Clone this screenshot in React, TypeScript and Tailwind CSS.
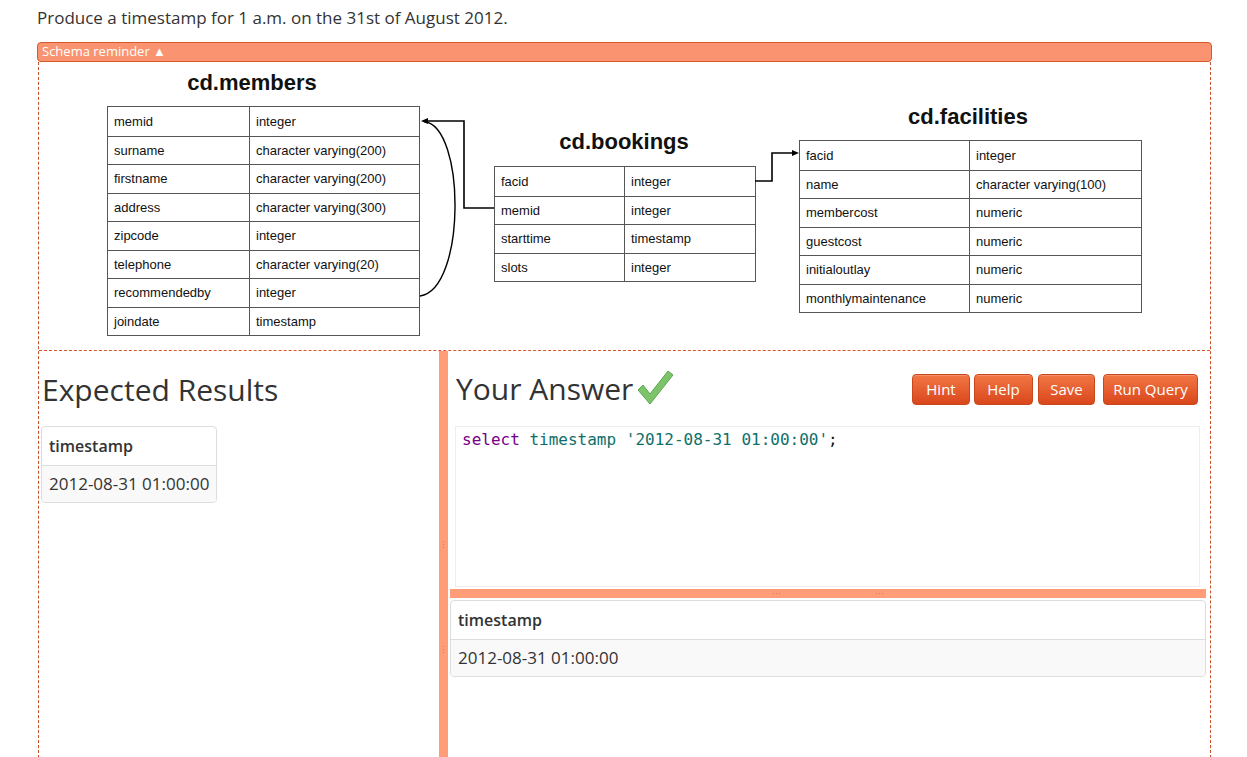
import React from "react";

const ui = { fontFamily: '"Open Sans", "Noto Sans", sans-serif' };
const arial = { fontFamily: '"Liberation Sans", Arial, sans-serif' };
const mono = { fontFamily: '"DejaVu Sans Mono", "Liberation Mono", monospace' };

type Row = [string, string];

function SchemaTable({
  rows,
  left,
  top,
  width,
  col1,
}: {
  rows: Row[];
  left: number;
  top: number;
  width: number;
  col1: number;
}) {
  return (
    <div
      className="absolute border border-[#555] bg-white"
      style={{ left, top, width, ...arial }}
    >
      {rows.map((r, i) => (
        <div
          key={i}
          className={`flex h-[28.5px] items-center text-[13px] text-[#111] ${i > 0 ? "border-t border-[#555]" : ""}`}
        >
          <div className="h-full flex items-center border-r border-[#555] pl-[6px]" style={{ width: col1 }}>
            {r[0]}
          </div>
          <div className="pl-[6px]">{r[1]}</div>
        </div>
      ))}
    </div>
  );
}

function SchemaTitle({ text, cx, cy }: { text: string; cx: number; cy: number }) {
  return (
    <div
      className="absolute -translate-x-1/2 -translate-y-1/2 whitespace-nowrap text-[22px] font-bold text-[#111]"
      style={{ left: cx, top: cy, ...arial }}
    >
      {text}
    </div>
  );
}

function Diagram() {
  const ox = 39;
  const oy = 62;
  return (
    <div className="relative h-[288px] w-full">
      <SchemaTitle text="cd.members" cx={252 - ox} cy={82 - oy} />
      <SchemaTable
        left={107 - ox}
        top={106 - oy}
        width={313}
        col1={142}
        rows={[
          ["memid", "integer"],
          ["surname", "character varying(200)"],
          ["firstname", "character varying(200)"],
          ["address", "character varying(300)"],
          ["zipcode", "integer"],
          ["telephone", "character varying(20)"],
          ["recommendedby", "integer"],
          ["joindate", "timestamp"],
        ]}
      />
      <SchemaTitle text="cd.bookings" cx={624 - ox} cy={141 - oy} />
      <SchemaTable
        left={494 - ox}
        top={166 - oy}
        width={262}
        col1={130}
        rows={[
          ["facid", "integer"],
          ["memid", "integer"],
          ["starttime", "timestamp"],
          ["slots", "integer"],
        ]}
      />
      <SchemaTitle text="cd.facilities" cx={968 - ox} cy={116 - oy} />
      <SchemaTable
        left={799 - ox}
        top={140 - oy}
        width={343}
        col1={170}
        rows={[
          ["facid", "integer"],
          ["name", "character varying(100)"],
          ["membercost", "numeric"],
          ["guestcost", "numeric"],
          ["initialoutlay", "numeric"],
          ["monthlymaintenance", "numeric"],
        ]}
      />
      <svg className="absolute left-0 top-0" width="1173" height="288" fill="none">
        <g transform="translate(-39 -62)">
          <path d="M494 208 H464 V121 H427" stroke="#000" strokeWidth="1.6" />
          <path d="M421 121 L428 118 L428 124 Z" fill="#000" />
          <path d="M420 296 C 466 290, 466 126, 424 121.5" stroke="#000" strokeWidth="1.4" />
          <path d="M755 181 H772 V153 H793" stroke="#000" strokeWidth="1.6" />
          <path d="M799 153 L792 150 L792 156 Z" fill="#000" />
        </g>
      </svg>
    </div>
  );
}

function Btn({ label, w, ml }: { label: string; w: string; ml: string }) {
  return (
    <button
      className={`${w} ${ml} h-[31px] rounded-[4px] border border-[#c9471d] bg-gradient-to-b from-[#f27644] to-[#d9461a] text-[15px] text-white shadow-[inset_0_1px_0_rgba(255,255,255,0.2)]`}
      style={ui}
    >
      {label}
    </button>
  );
}

function Check() {
  return (
    <svg width="38" height="38" viewBox="0 0 38 38">
      <path
        d="M2 21 L7 16 L14 25 L32 2 L37 6 L14 35 Z"
        fill="#7cc36c"
        stroke="#5aa84c"
        strokeWidth="1"
        strokeLinejoin="round"
      />
    </svg>
  );
}

function ResultTable({ width }: { width: string }) {
  return (
    <div className={`${width} overflow-hidden whitespace-nowrap rounded-[4px] border border-[#ddd] text-[#333]`} style={ui}>
      <div className="flex h-[38px] items-center px-[7px] text-[16px] font-semibold">timestamp</div>
      <div className="flex h-[37px] items-center border-t border-[#ddd] bg-[#f9f9f9] px-[7px] text-[17px]">
        2012-08-31 01:00:00
      </div>
    </div>
  );
}

function VDots() {
  return (
    <div className="flex flex-col items-center gap-[2px]">
      <div className="h-[1px] w-[1px] bg-[#c9805f]" />
      <div className="h-[1px] w-[1px] bg-[#c9805f]" />
      <div className="h-[1px] w-[1px] bg-[#c9805f]" />
    </div>
  );
}

function HDots() {
  return (
    <div className="flex gap-[2px]">
      <div className="h-[1px] w-[1px] bg-[#c9805f]" />
      <div className="h-[1px] w-[1px] bg-[#c9805f]" />
      <div className="h-[1px] w-[1px] bg-[#c9805f]" />
    </div>
  );
}

export default function App() {
  return (
    <div className="h-[757px] w-full overflow-hidden bg-white pl-[37px] pr-[35px] text-[#333]" style={ui}>
      <p className="pt-[6px] text-[17px] leading-[24px] text-[#333]">
        Produce a timestamp for 1 a.m. on the 31st of August 2012.
      </p>
      <div className="mt-[12px] flex h-[20px] items-center rounded-[4px] border border-[#d4592c] bg-[#fa9470] pl-[4px] text-[13px] text-white">
        Schema reminder ▲
      </div>
      <div className="ml-[1px] mr-[1px] border-x border-dashed border-x-[#c5502a]">
        <div className="border-b border-dashed border-b-[#d9552a]">
          <Diagram />
        </div>
        <div className="flex h-[407px]">
          <div className="w-[400px] shrink-0 pl-[3px]">
            <h2 className="mt-[19px] text-[30px] leading-[40px] text-[#333]">Expected Results</h2>
            <div className="-ml-[1px] mt-[16px]">
              <ResultTable width="w-fit" />
            </div>
          </div>
          <div className="flex w-[9px] shrink-0 flex-col items-center justify-center gap-[98px] bg-[#ff9d78] pt-[85px]">
            <VDots />
            <VDots />
          </div>
          <div className="flex min-w-0 flex-1 flex-col">
            <div className="flex h-[75px] items-center pl-[8px] pr-[12px]">
              <h2 className="text-[30px] leading-[40px] text-[#333]">Your Answer</h2>
              <div className="ml-[3px] mt-[-2px]">
                <Check />
              </div>
              <div className="ml-auto mt-[2px] flex">
                <Btn label="Hint" w="w-[58px]" ml="ml-0" />
                <Btn label="Help" w="w-[59px]" ml="ml-[4px]" />
                <Btn label="Save" w="w-[57px]" ml="ml-[5px]" />
                <Btn label="Run Query" w="w-[95px]" ml="ml-[8px]" />
              </div>
            </div>
            <div className="ml-[7px] mr-[10px] h-[161px] border border-[#eee] px-[6px] pt-[2px]">
              <div className="text-[16px] leading-[22px]" style={mono}>
                <span className="text-[#770088]">select</span>{" "}
                <span className="text-[#0f6f6a]">timestamp</span>{" "}
                <span className="text-[#0f6f6a]">'2012-08-31 01:00:00'</span>
                <span className="text-[#111]">;</span>
              </div>
            </div>
            <div className="ml-[2px] mr-[4px] mt-[2px] flex h-[9px] items-center justify-center gap-[96px] bg-[#ff9d78]">
              <HDots />
              <HDots />
            </div>
            <div className="ml-[2px] mr-[4px] mt-[2px]">
              <ResultTable width="w-full" />
            </div>
          </div>
        </div>
      </div>
    </div>
  );
}
